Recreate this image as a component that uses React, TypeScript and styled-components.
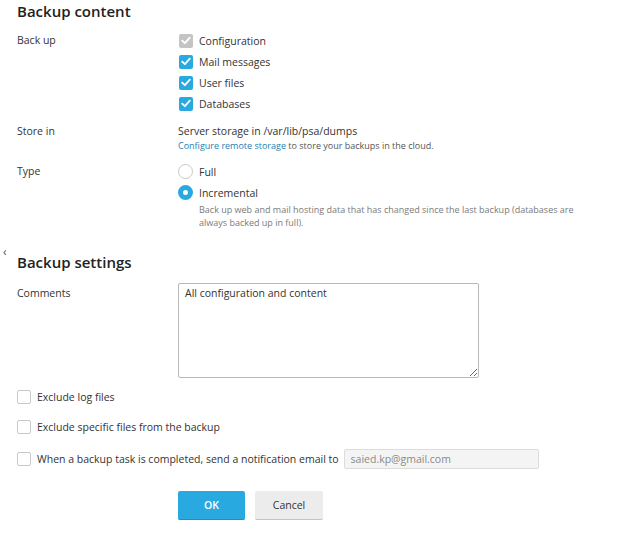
import React from 'react';
import styled, { createGlobalStyle } from 'styled-components';

const GlobalStyle = createGlobalStyle`
	html, body {
		margin: 0;
		padding: 0;
		background: #fff;
	}
	body {
		font-family: "Open Sans", "Noto Sans", sans-serif;
		font-size: 10.5px;
		color: #333;
	}
`;

const Check = ({ color = '#fff' }: { color?: string }) => (
	<svg width="10" height="9" viewBox="0 0 10 9" fill="none">
		<path d="M1.2 4.6 L3.9 7.2 L8.8 1.6" stroke={color} strokeWidth="1.8" strokeLinecap="round" strokeLinejoin="round" />
	</svg>
);

const CheckBox = ({ checked, disabled }: { checked?: boolean; disabled?: boolean }) => (
	<Box $checked={checked} $disabled={disabled}>
		{checked && <Check />}
	</Box>
);

const App = () => {
	return (
		<Page>
			<GlobalStyle />
			<Section>
				<SectionTitle>Backup content</SectionTitle>
				<FormRow>
					<Label>Back up</Label>
					<Field>
						<Option><CheckBox checked disabled />Configuration</Option>
						<Option><CheckBox checked />Mail messages</Option>
						<Option><CheckBox checked />User files</Option>
						<Option><CheckBox checked />Databases</Option>
					</Field>
				</FormRow>
				<FormRow $gap={8}>
					<Label $lh={18}>Store in</Label>
					<Field>
						<Value>Server storage in /var/lib/psa/dumps</Value>
						<Hint><Link>Configure remote storage</Link> to store your backups in the cloud.</Hint>
					</Field>
				</FormRow>
				<FormRow $gap={9}>
					<Label>Type</Label>
					<Field>
						<Option><Radio />Full</Option>
						<Option><Radio $checked />Incremental</Option>
						<Description>
							Back up web and mail hosting data that has changed since the last backup (databases are always backed up in full).
						</Description>
					</Field>
				</FormRow>
			</Section>

			<Section $gap={22}>
				<Collapse>‹</Collapse>
				<SectionTitle>Backup settings</SectionTitle>
				<FormRow $gap={10}>
					<Label>Comments</Label>
					<Field>
						<Comments readOnly defaultValue="All configuration and content" />
					</Field>
				</FormRow>
				<CheckRow $gap={8}><CheckBox />Exclude log files</CheckRow>
				<CheckRow $gap={9}><CheckBox />Exclude specific files from the backup</CheckRow>
				<CheckRow $gap={11}>
					<CheckBox />When a backup task is completed, send a notification email to
					<EmailInput readOnly value="saied.kp@gmail.com" />
				</CheckRow>
				<Buttons>
					<Button $primary>OK</Button>
					<Button>Cancel</Button>
				</Buttons>
			</Section>
		</Page>
	);
};

export default App;

const Page = styled.div`
	width: 640px;
	height: 538px;
	padding-left: 17px;
	box-sizing: border-box;
	overflow: hidden;
`;

const Section = styled.div<{ $gap?: number }>`
	position: relative;
	margin-top: ${p => p.$gap ?? 0}px;
`;

const SectionTitle = styled.h2`
	margin: 0 0 8px;
	font-size: 15px;
	font-weight: 600;
	line-height: 22px;
	color: #222;
`;

const Collapse = styled.span`
	position: absolute;
	left: -14px;
	top: -5px;
	font-size: 12px;
	line-height: 12px;
	color: #555;
`;

const FormRow = styled.div<{ $gap?: number }>`
	display: flex;
	align-items: flex-start;
	margin-top: ${p => p.$gap ?? 0}px;
`;

const Label = styled.div<{ $lh?: number }>`
	width: 161px;
	flex: none;
	line-height: ${p => p.$lh ?? 21}px;
	color: #333;
`;

const Field = styled.div`
	display: flex;
	flex-direction: column;
`;

const Option = styled.label`
	display: flex;
	align-items: center;
	gap: 6px;
	height: 21px;
	color: #333;
`;

const Box = styled.span<{ $checked?: boolean; $disabled?: boolean }>`
	width: 14px;
	height: 14px;
	box-sizing: border-box;
	flex: none;
	display: inline-flex;
	align-items: center;
	justify-content: center;
	border-radius: 2px;
	margin-left: 1px;
	background: ${p => (p.$disabled ? '#c4c4c4' : p.$checked ? '#28aae1' : '#fff')};
	border: ${p => (p.$checked ? 'none' : '1px solid #c9c9c9')};
`;

const Radio = styled.span<{ $checked?: boolean }>`
	width: 15px;
	height: 15px;
	box-sizing: border-box;
	flex: none;
	border-radius: 50%;
	background: #fff;
	border: ${p => (p.$checked ? '5px solid #28aae1' : '1px solid #c9c9c9')};
`;

const Value = styled.div`
	line-height: 18px;
	color: #333;
`;

const Hint = styled.div`
	font-size: 9px;
	line-height: 12px;
	color: #555;
`;

const Link = styled.span`
	color: #1d7fb5;
`;

const Description = styled.div`
	width: 390px;
	padding-left: 21px;
	font-size: 9px;
	line-height: 13px;
	color: #7a7a7a;
`;

const Comments = styled.textarea`
	width: 301px;
	height: 95px;
	box-sizing: border-box;
	margin: 0;
	padding: 2px 6px;
	border: 1px solid #b8b8b8;
	border-radius: 2px;
	font-family: "Open Sans", "Noto Sans", sans-serif;
	font-size: 10.5px;
	line-height: 15px;
	color: #333;
	outline: none;
	resize: both;
`;

const CheckRow = styled.label<{ $gap?: number }>`
	display: flex;
	align-items: center;
	gap: 6px;
	height: 21px;
	margin-top: ${p => p.$gap ?? 0}px;
	color: #333;

	${Box} {
		margin-left: 0;
	}
`;

const EmailInput = styled.input`
	width: 195px;
	height: 20px;
	box-sizing: border-box;
	margin-left: -1px;
	padding: 0 6px;
	border: 1px solid #dcdcdc;
	border-radius: 2px;
	background: #f4f4f4;
	font-family: "Open Sans", "Noto Sans", sans-serif;
	font-size: 10.5px;
	color: #8a8a8a;
	outline: none;
`;

const Buttons = styled.div`
	display: flex;
	gap: 10px;
	margin-top: 22px;
	padding-left: 161px;
`;

const Button = styled.button<{ $primary?: boolean }>`
	height: 29px;
	min-width: ${p => (p.$primary ? 67 : 68)}px;
	padding: 0 14px;
	border: none;
	border-radius: 2px;
	border-bottom: 1px solid ${p => (p.$primary ? '#1e8fc0' : '#c4c4c4')};
	background: ${p => (p.$primary ? '#28aae1' : '#ececec')};
	color: ${p => (p.$primary ? '#fff' : '#333')};
	font-family: "Open Sans", "Noto Sans", sans-serif;
	font-size: 10.5px;
	font-weight: ${p => (p.$primary ? 600 : 400)};
	cursor: pointer;
`;
